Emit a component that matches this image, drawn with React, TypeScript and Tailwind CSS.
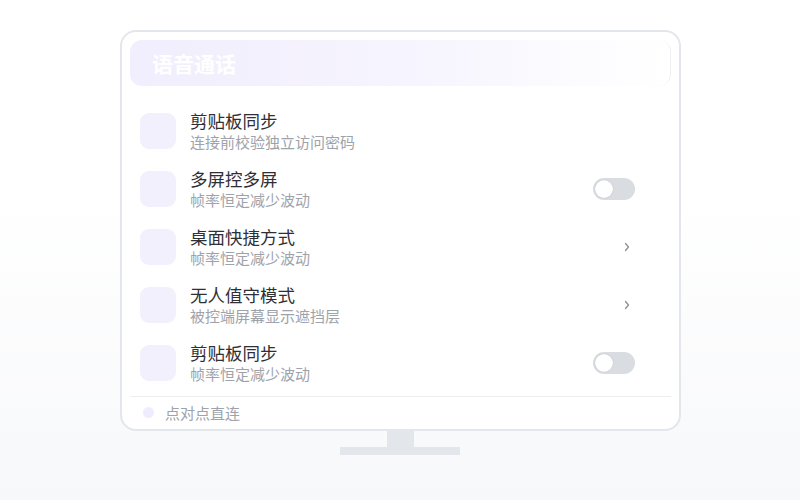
const rows = [
  { title: "剪贴板同步", sub: "连接前校验独立访问密码", action: "none" },
  { title: "多屏控多屏", sub: "帧率恒定减少波动", action: "toggle" },
  { title: "桌面快捷方式", sub: "帧率恒定减少波动", action: "chevron" },
  { title: "无人值守模式", sub: "被控端屏幕显示遮挡层", action: "chevron" },
  { title: "剪贴板同步", sub: "帧率恒定减少波动", action: "toggle" },
];

function Toggle() {
  return (
    <div className="w-[42px] h-[22px] rounded-full bg-[#d9dce1] p-[2px] flex items-center mr-[2px]">
      <div className="w-[18px] h-[18px] rounded-full bg-white shadow-[0_0_1px_rgba(0,0,0,0.25)]"></div>
    </div>
  );
}

function Chevron() {
  return (
    <svg width="8" height="10" viewBox="0 0 8 10" className="mr-[6px]">
      <path d="M2.5 1.5 L5.5 5 L2.5 8.5" fill="none" stroke="#8b9099" strokeWidth="1.3" strokeLinecap="round" strokeLinejoin="round" />
    </svg>
  );
}

export default function App() {
  return (
    <div
      className="w-[800px] h-[500px] bg-gradient-to-b from-white from-40% to-[#f7f8fa] flex flex-col items-center pt-[30px]"
      style={{ fontFamily: '"Noto Sans CJK SC", "Noto Sans", sans-serif' }}
    >
      {/* Monitor */}
      <div className="w-[561px] ml-[1px] h-[401px] rounded-[16px] border-2 border-[#e3e6ea] bg-white px-[8px] pt-[8px] flex flex-col">
        {/* Header */}
        <div className="h-[46px] rounded-[12px] bg-gradient-to-r from-[#f1eefd] via-[#f6f4fe] to-white border-r border-[#eef0f4] flex items-center pl-[22px]">
          <span className="text-white text-[21px] font-bold leading-none">语音通话</span>
        </div>

        {/* List */}
        <div className="flex flex-col mt-[16px] px-[10px]">
          {rows.map((r, i) => (
            <div key={i} className="h-[58px] flex items-center">
              <div className="w-[36px] h-[36px] rounded-[9px] bg-[#f3f0fd] shrink-0"></div>
              <div className="ml-[14px] flex flex-col flex-1">
                <span className="text-[17.5px] leading-[22px] text-[#2f3036]">{r.title}</span>
                <span className="text-[15px] leading-[20px] text-[#9ea3ab]">{r.sub}</span>
              </div>
              <div className="w-[60px] flex justify-end mr-[24px]">
                {r.action === "toggle" && <Toggle />}
                {r.action === "chevron" && <Chevron />}
              </div>
            </div>
          ))}
        </div>

        {/* Footer */}
        <div className="mt-[4px] border-t border-[#eceef1] flex-1 flex items-center pl-[13px] pb-[2px]">
          <div className="w-[11px] h-[11px] rounded-full bg-[#efecfd]"></div>
          <span className="ml-[11px] text-[15px] text-[#9ea3ab] leading-none">点对点直连</span>
        </div>
      </div>

      {/* Stand */}
      <div className="w-[27px] h-[16px] bg-[#e3e6ea]"></div>
      <div className="w-[120px] h-[8px] bg-[#e3e6ea]"></div>
    </div>
  );
}
